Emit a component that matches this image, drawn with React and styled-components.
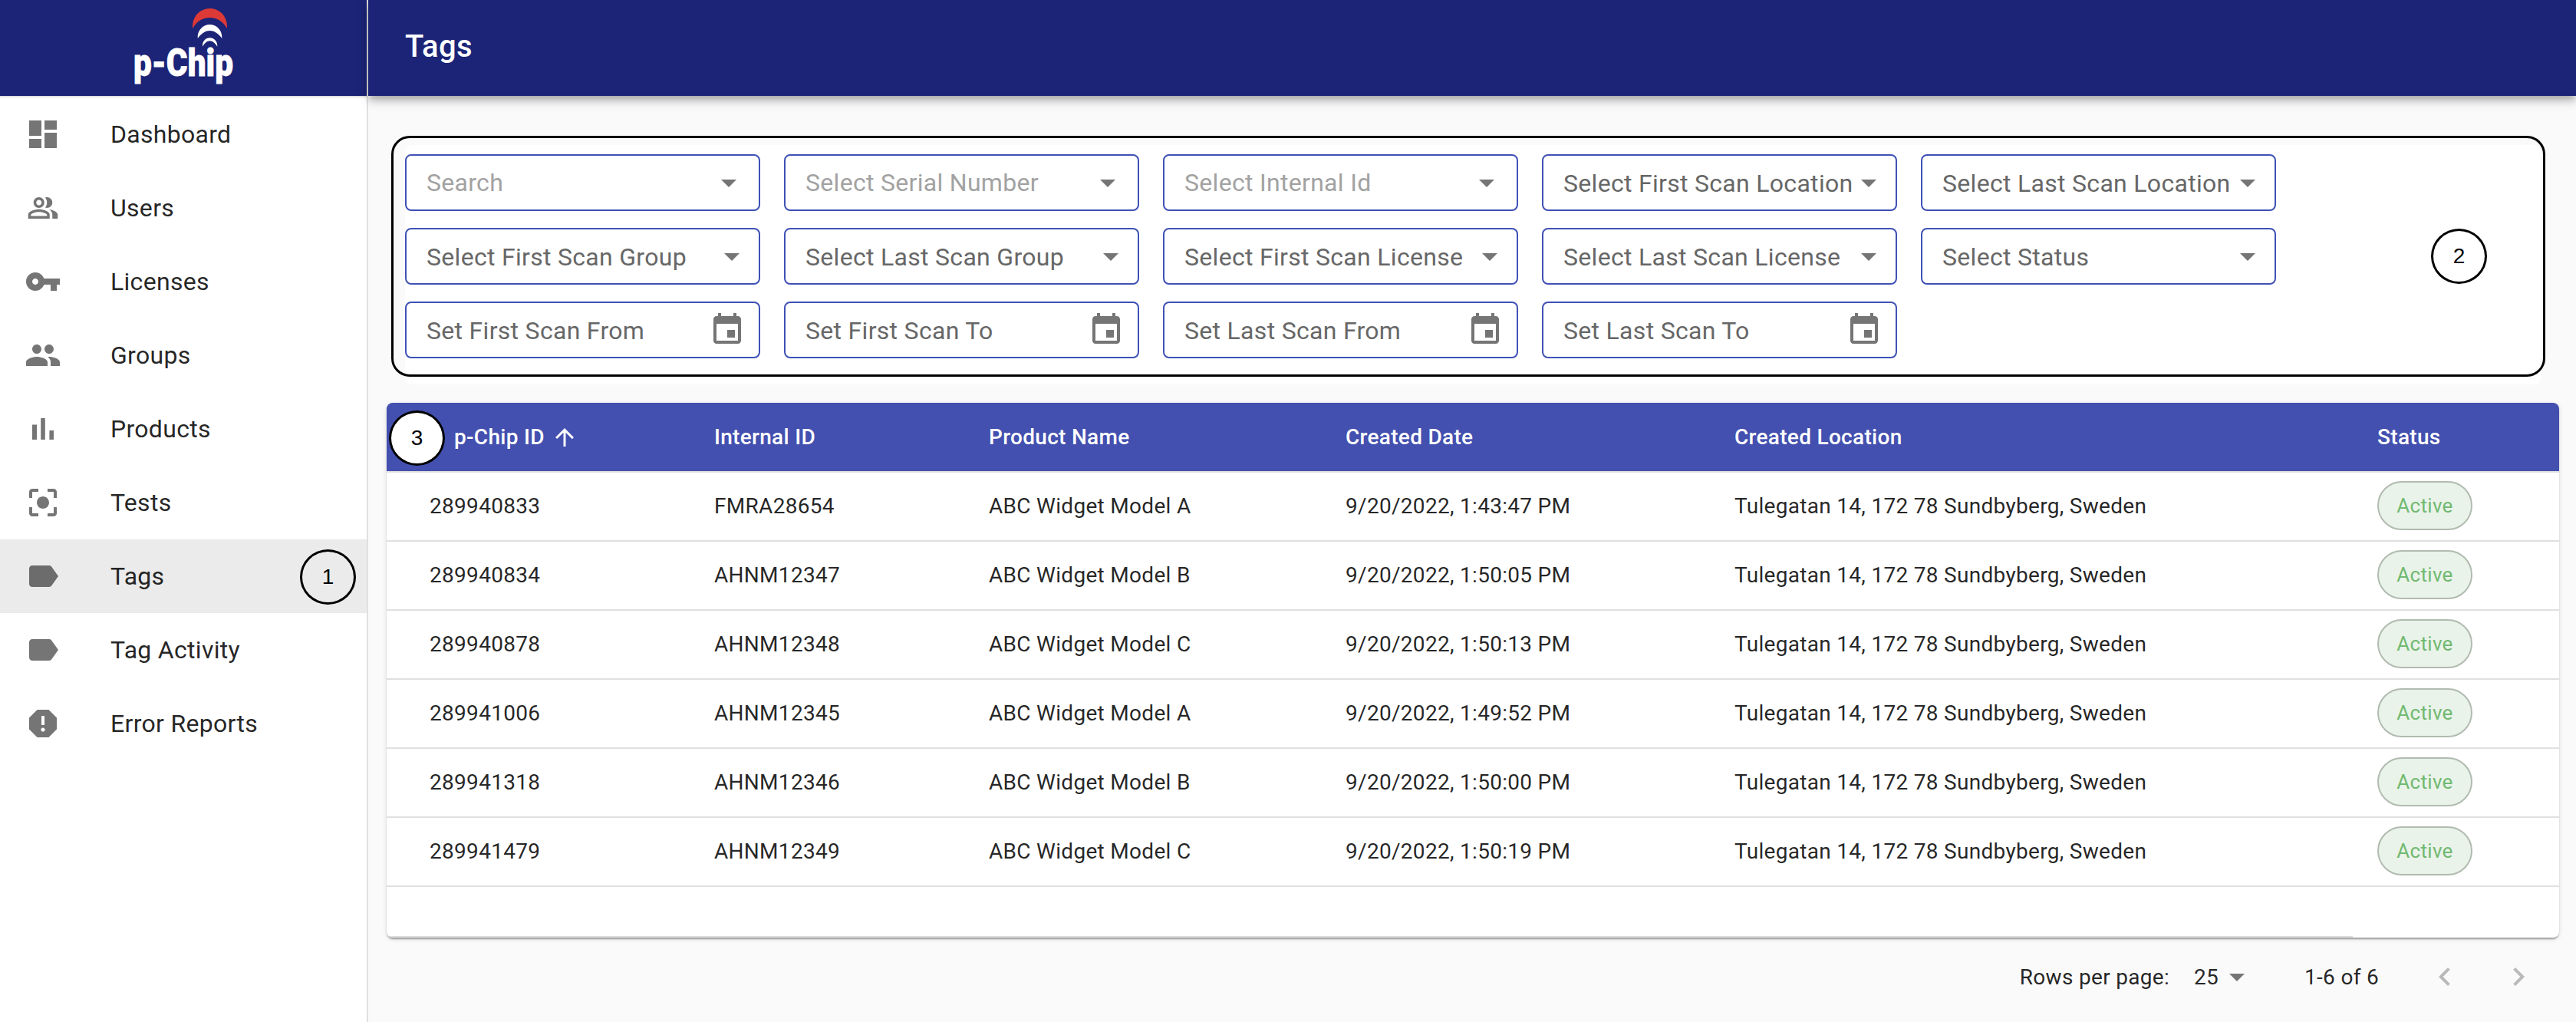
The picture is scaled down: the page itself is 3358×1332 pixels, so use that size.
import styled, { createGlobalStyle } from "styled-components";

const GlobalStyle = createGlobalStyle`
  html, body {
    margin: 0;
    height: 100%;
    overflow: hidden;
    background: #fafafa;
    font-family: Roboto, "Liberation Sans", sans-serif;
  }
  * {
    box-sizing: border-box;
  }
`;

const Layout = styled.div`
  display: flex;
  height: 100vh;
`;

const Sidebar = styled.aside`
  flex: 0 0 480px;
  background: #fff;
  border-right: 2px solid #e0e0e0;
`;

const Brand = styled.div`
  height: 127px;
  background: #1c2477;
  border-bottom: 2px solid #e0e0e0;
`;

const NavList = styled.nav`
  display: flex;
  flex-direction: column;
`;

const NavItem = styled.div`
  position: relative;
  height: 96px;
  padding-left: 32px;
  display: flex;
  align-items: center;
  background: ${(props) => (props.$active ? "#ebebeb" : "transparent")};
`;

const NavIcon = styled.svg`
  flex: 0 0 48px;
  width: 48px;
  height: 48px;
  margin-right: 64px;
  fill: rgba(0, 0, 0, 0.54);
`;

const NavLabel = styled.span`
  font-size: 32px;
  letter-spacing: 0.3px;
  color: rgba(0, 0, 0, 0.87);
`;

const Badge = styled.div`
  position: absolute;
  width: 73px;
  height: 72px;
  display: flex;
  align-items: center;
  justify-content: center;
  border: 3px solid #000;
  border-radius: 50%;
  font-family: "Liberation Sans", sans-serif;
  font-size: 28px;
  color: #000;
  background: ${(props) => (props.$filled ? "#fff" : "transparent")};
`;

const NavBadge = styled(Badge)`
  right: 14px;
  top: 13px;
`;

const PanelBadge = styled(Badge)`
  right: 70px;
  top: 109px;
`;

const HeadBadge = styled(Badge)`
  left: 3px;
  top: 10px;
`;

const Main = styled.main`
  flex: 1;
  min-width: 0;
  display: flex;
  flex-direction: column;
`;

const TopBar = styled.header`
  flex: 0 0 125px;
  padding: 0 0 4px 48px;
  display: flex;
  align-items: center;
  background: #1c2477;
  color: #fff;
  font-size: 40px;
  font-weight: 500;
  letter-spacing: 0.3px;
  box-shadow: 0 4px 8px -2px rgba(0, 0, 0, 0.2), 0 8px 10px 0 rgba(0, 0, 0, 0.14),
    0 2px 20px 0 rgba(0, 0, 0, 0.12);
`;

const Content = styled.div`
  padding: 64px 22px 0 24px;
`;

const FilterPanel = styled.section`
  position: relative;
  margin: 0 24px 24px;
  padding: 12px 0 34px;
  display: grid;
  grid-template-columns: repeat(5, 463px);
  grid-auto-rows: 74px;
  column-gap: 31px;
  row-gap: 22px;
  background: #fff;
  border-radius: 8px;
`;

const PanelOutline = styled.div`
  position: absolute;
  left: -18px;
  top: -12px;
  right: -6px;
  bottom: 10px;
  border: 3px solid #000;
  border-radius: 24px;
  pointer-events: none;
`;

const FIELD_RIGHT = { auto: 15, select: 11, date: 17 };

const Field = styled.div`
  display: flex;
  align-items: center;
  padding-left: 26px;
  padding-right: ${(props) => FIELD_RIGHT[props.$kind]}px;
  border: 2px solid #3f51b5;
  border-radius: 8px;
`;

const FieldLabel = styled.span`
  flex: 1;
  min-width: 0;
  white-space: nowrap;
  font-size: 32px;
  letter-spacing: 0.3px;
  padding-top: ${(props) => (props.$kind === "auto" ? 0 : 2)}px;
  color: ${(props) => (props.$kind === "auto" ? "#a2a2a2" : "#676767")};
`;

const FieldIcon = styled.svg`
  flex: 0 0 48px;
  width: 48px;
  height: 48px;
  fill: #757575;
`;

const Table = styled.section`
  position: relative;
  height: 697px;
  background: #fff;
  border-radius: 8px;
  overflow: hidden;
  box-shadow: 0 4px 2px -2px rgba(0, 0, 0, 0.2), 0 2px 2px 0 rgba(0, 0, 0, 0.14),
    0 2px 6px 0 rgba(0, 0, 0, 0.12);
`;

const TABLE_COLUMNS = "371px 358px 465px 507px 838px 1fr";

const HeadRow = styled.div`
  position: relative;
  height: 91px;
  padding-left: 56px;
  display: grid;
  grid-template-columns: ${TABLE_COLUMNS};
  align-items: center;
  background: #4350af;
  border-bottom: 2px solid #e0e0e0;
`;

const HeadCell = styled.div`
  display: flex;
  align-items: center;
  gap: 8px;
  padding-left: ${(props) => (props.$indent ? 32 : 0)}px;
  font-size: 28px;
  font-weight: 500;
  letter-spacing: 0.3px;
  color: #fff;
`;

const SortIcon = styled.svg`
  width: 36px;
  height: 36px;
  fill: #fff;
`;

const Row = styled.div`
  height: 90px;
  padding: 0 0 2px 56px;
  display: grid;
  grid-template-columns: ${TABLE_COLUMNS};
  align-items: center;
  border-bottom: 2px solid #e0e0e0;
`;

const Cell = styled.div`
  font-size: 28px;
  letter-spacing: 0.3px;
  color: rgba(0, 0, 0, 0.87);
`;

const StatusChip = styled.span`
  display: inline-flex;
  align-items: center;
  justify-content: center;
  width: 124px;
  height: 64px;
  border: 2px solid #b1bbb0;
  border-radius: 32px;
  background: #e9f3e9;
  font-size: 26px;
  letter-spacing: 0.3px;
  color: #71b971;
`;

const ScrollTrack = styled.div`
  position: absolute;
  left: 0;
  bottom: 0;
  width: 2563px;
  height: 2px;
  background: #dcdcdc;
`;

const Pagination = styled.div`
  height: 102px;
  padding-right: 17px;
  display: flex;
  align-items: center;
  justify-content: flex-end;
  font-size: 28px;
  letter-spacing: 0.3px;
  color: rgba(0, 0, 0, 0.87);
`;

const PageSelect = styled.div`
  display: flex;
  align-items: center;
  margin-left: 32px;
  margin-right: 64px;
`;

const PageArrow = styled.svg`
  width: 48px;
  height: 48px;
  fill: #757575;
`;

const PageCount = styled.span`
  margin-right: 50px;
`;

const PageButton = styled.div`
  width: 72px;
  height: 72px;
  display: flex;
  align-items: center;
  justify-content: center;
  margin-left: ${(props) => (props.$next ? 24 : 0)}px;
`;

const PageChevron = styled.svg`
  width: 48px;
  height: 48px;
  fill: rgba(0, 0, 0, 0.26);
`;

const navItems = [
  {
    label: "Dashboard",
    icon: <path d="M3 13h8V3H3v10zm0 8h8v-6H3v6zm10 0h8V11h-8v10zm0-18v6h8V3h-8z" />,
  },
  {
    label: "Users",
    icon: (
      <path
        transform="translate(1.5 1.5) scale(0.875)"
        d="M16.67 13.13C18.04 14.06 19 15.32 19 17v3h4v-3c0-2.18-3.57-3.47-6.33-3.87zM15 12c2.21 0 4-1.79 4-4s-1.79-4-4-4c-.47 0-.91.1-1.33.24C14.5 5.27 15 6.58 15 8s-.5 2.73-1.33 3.76c.42.14.86.24 1.33.24zM9 12c2.21 0 4-1.79 4-4s-1.79-4-4-4-4 1.79-4 4 1.79 4 4 4zm0-6c1.1 0 2 .9 2 2s-.9 2-2 2-2-.9-2-2 .9-2 2-2zM9 13c-2.67 0-8 1.34-8 4v3h16v-3c0-2.66-5.33-4-8-4zm6 5H3v-.99C3.2 16.29 6.3 15 9 15s5.8 1.29 6 2z"
      />
    ),
  },
  {
    label: "Licenses",
    icon: (
      <path d="M12.65 10C11.83 7.67 9.61 6 7 6c-3.31 0-6 2.69-6 6s2.69 6 6 6c2.61 0 4.83-1.67 5.65-4H17v4h4v-4h2v-4H12.65zM7 14c-1.1 0-2-.9-2-2s.9-2 2-2 2 .9 2 2-.9 2-2 2z" />
    ),
  },
  {
    label: "Groups",
    icon: (
      <path d="M16 11c1.66 0 2.99-1.34 2.99-3S17.66 5 16 5c-1.66 0-3 1.34-3 3s1.34 3 3 3zm-8 0c1.66 0 2.99-1.34 2.99-3S9.66 5 8 5C6.34 5 5 6.34 5 8s1.34 3 3 3zm0 2c-2.33 0-7 1.17-7 3.5V19h14v-2.5c0-2.33-4.67-3.5-7-3.5zm8 0c-.29 0-.62.02-.97.05 1.16.84 1.97 1.97 1.97 3.45V19h6v-2.5c0-2.33-4.67-3.5-7-3.5z" />
    ),
  },
  { label: "Products", icon: <path d="M5 9.2h3V19H5zM10.6 5h2.8v14h-2.8zm5.6 8H19v6h-2.8z" /> },
  {
    label: "Tests",
    icon: (
      <path d="M12 8c-2.21 0-4 1.79-4 4s1.79 4 4 4 4-1.79 4-4-1.79-4-4-4zm-7 7H3v4c0 1.1.9 2 2 2h4v-2H5v-4zM5 5h4V3H5c-1.1 0-2 .9-2 2v4h2V5zm14-2h-4v2h4v4h2V5c0-1.1-.9-2-2-2zm0 16h-4v2h4c1.1 0 2-.9 2-2v-4h-2v4z" />
    ),
  },
  {
    label: "Tags",
    active: true,
    icon: (
      <path d="M17.63 5.84C17.27 5.33 16.67 5 16 5L5 5.01C3.9 5.01 3 5.9 3 7v10c0 1.1.9 1.99 2 1.99L16 19c.67 0 1.27-.33 1.63-.84L22 12l-4.37-6.16z" />
    ),
  },
  {
    label: "Tag Activity",
    icon: (
      <path d="M17.63 5.84C17.27 5.33 16.67 5 16 5L5 5.01C3.9 5.01 3 5.9 3 7v10c0 1.1.9 1.99 2 1.99L16 19c.67 0 1.27-.33 1.63-.84L22 12l-4.37-6.16z" />
    ),
  },
  {
    label: "Error Reports",
    icon: (
      <path d="M15.73 3H8.27L3 8.27v7.46L8.27 21h7.46L21 15.73V8.27L15.73 3zM12 17.3c-.72 0-1.3-.58-1.3-1.3 0-.72.58-1.3 1.3-1.3.72 0 1.3.58 1.3 1.3 0 .72-.58 1.3-1.3 1.3zm1-4.3h-2V7h2v6z" />
    ),
  },
];

const filters = [
  ["Search", "auto"],
  ["Select Serial Number", "auto"],
  ["Select Internal Id", "auto"],
  ["Select First Scan Location", "select"],
  ["Select Last Scan Location", "select"],
  ["Select First Scan Group", "select"],
  ["Select Last Scan Group", "select"],
  ["Select First Scan License", "select"],
  ["Select Last Scan License", "select"],
  ["Select Status", "select"],
  ["Set First Scan From", "date"],
  ["Set First Scan To", "date"],
  ["Set Last Scan From", "date"],
  ["Set Last Scan To", "date"],
];

const rows = [
  ["289940833", "FMRA28654", "ABC Widget Model A", "9/20/2022, 1:43:47 PM"],
  ["289940834", "AHNM12347", "ABC Widget Model B", "9/20/2022, 1:50:05 PM"],
  ["289940878", "AHNM12348", "ABC Widget Model C", "9/20/2022, 1:50:13 PM"],
  ["289941006", "AHNM12345", "ABC Widget Model A", "9/20/2022, 1:49:52 PM"],
  ["289941318", "AHNM12346", "ABC Widget Model B", "9/20/2022, 1:50:00 PM"],
  ["289941479", "AHNM12349", "ABC Widget Model C", "9/20/2022, 1:50:19 PM"],
];

const LOCATION = "Tulegatan 14, 172 78 Sundbyberg, Sweden";

const Logo = () => (
  <svg width="478" height="125" viewBox="0 0 478 125">
    <path
      fill="#dd3a37"
      d="M251 37C250 20 262 11 273.500 11C285 11 297 20 296 37C290 27 282 23 273.500 23C265 23 257 27 251 37Z"
    />
    <path
      fill="#fff"
      d="M257.700 50C257 39 265 32 273.500 32C282 32 290 39 289.300 50C284 43 279 40 273.500 40C268 40 263 43 257.700 50Z"
    />
    <path
      fill="#fff"
      d="M264 60.700C263.500 54 268 49.300 273.500 49.300C279 49.300 283.800 54 283.300 60.700C280 56 277 53.300 273.500 53.300C270 53.300 267 56 264 60.700Z"
    />
    <text
      x="174"
      y="99"
      fill="#fff"
      stroke="#fff"
      strokeWidth="0.8"
      fontFamily="Roboto, sans-serif"
      fontWeight="900"
      fontSize="50"
      textLength="130"
      lengthAdjust="spacingAndGlyphs"
    >
      p-Chip
    </text>
  </svg>
);

const FilterField = ({ label, kind }) => (
  <Field $kind={kind}>
    <FieldLabel $kind={kind}>{label}</FieldLabel>
    <FieldIcon viewBox="0 0 24 24">
      {kind === "date" ? (
        <path d="M17 12h-5v5h5v-5zM16 1v2H8V1H6v2H5c-1.110 0-1.990.9-1.990 2L3 19c0 1.100.89 2 2 2h14c1.100 0 2-.9 2-2V5c0-1.100-.9-2-2-2h-1V1h-2zm3 18H5V8h14v11z" />
      ) : (
        <path d="M7 10l5 5 5-5z" />
      )}
    </FieldIcon>
  </Field>
);

const App = () => (
  <Layout>
    <GlobalStyle />
    <Sidebar>
      <Brand>
        <Logo />
      </Brand>
      <NavList>
        {navItems.map((item) => (
          <NavItem key={item.label} $active={item.active}>
            <NavIcon viewBox="0 0 24 24">{item.icon}</NavIcon>
            <NavLabel>{item.label}</NavLabel>
            {item.active && <NavBadge>1</NavBadge>}
          </NavItem>
        ))}
      </NavList>
    </Sidebar>
    <Main>
      <TopBar>Tags</TopBar>
      <Content>
        <FilterPanel>
          {filters.map(([label, kind]) => (
            <FilterField key={label} label={label} kind={kind} />
          ))}
          <PanelOutline />
          <PanelBadge>2</PanelBadge>
        </FilterPanel>
        <Table>
          <HeadRow>
            <HeadCell $indent>
              p-Chip ID
              <SortIcon viewBox="0 0 24 24">
                <path d="M4 12l1.410 1.410L11 7.830V20h2V7.830l5.580 5.590L20 12l-8-8-8 8z" />
              </SortIcon>
            </HeadCell>
            <HeadCell>Internal ID</HeadCell>
            <HeadCell>Product Name</HeadCell>
            <HeadCell>Created Date</HeadCell>
            <HeadCell>Created Location</HeadCell>
            <HeadCell>Status</HeadCell>
            <HeadBadge $filled>3</HeadBadge>
          </HeadRow>
          {rows.map((row) => (
            <Row key={row[0]}>
              {row.map((value) => (
                <Cell key={value}>{value}</Cell>
              ))}
              <Cell>{LOCATION}</Cell>
              <Cell>
                <StatusChip>Active</StatusChip>
              </Cell>
            </Row>
          ))}
          <ScrollTrack />
        </Table>
        <Pagination>
          Rows per page:
          <PageSelect>
            25
            <PageArrow viewBox="0 0 24 24">
              <path d="M7 10l5 5 5-5z" />
            </PageArrow>
          </PageSelect>
          <PageCount>1-6 of 6</PageCount>
          <PageButton>
            <PageChevron viewBox="0 0 24 24">
              <path d="M15.410 7.410L14 6l-6 6 6 6 1.410-1.410L10.830 12z" />
            </PageChevron>
          </PageButton>
          <PageButton $next>
            <PageChevron viewBox="0 0 24 24">
              <path d="M10 6L8.590 7.410 13.170 12l-4.580 4.590L10 18l6-6z" />
            </PageChevron>
          </PageButton>
        </Pagination>
      </Content>
    </Main>
  </Layout>
);

export default App;
